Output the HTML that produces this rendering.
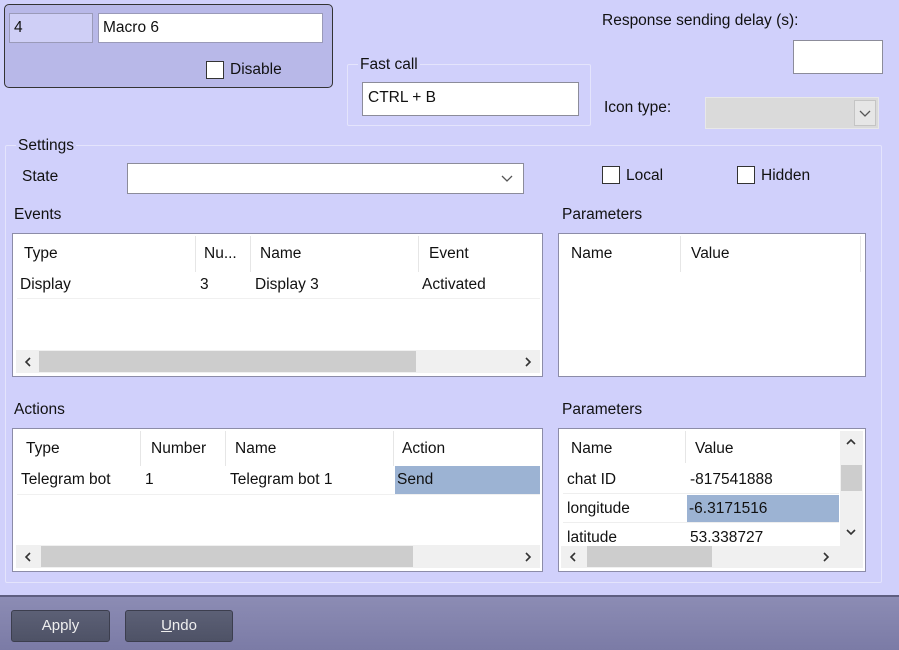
<!DOCTYPE html>
<html><head><meta charset="utf-8"><style>
*{box-sizing:border-box;margin:0;padding:0}
body{width:899px;height:650px;background:#d0d0fb;font-family:"Liberation Sans",sans-serif;font-size:15.5px;color:#111;position:relative;overflow:hidden}
.a{position:absolute}
.t{position:absolute;white-space:nowrap;line-height:16px}
.in{position:absolute;background:#fff;border:1px solid #8c8c9a}
.cb{position:absolute;width:18px;height:18px;background:#fff;border:1px solid #333}
.grp{position:absolute;border:1px solid #e4e4fc;border-radius:2px}
.tbl{position:absolute;background:#fff;border:1px solid #8c8ca8}
.sep{position:absolute;width:1px;background:#e6e6e6}
.hl{position:absolute;background:#9cb3d3}
.sb{position:absolute;background:#f0f0f0}
.th{position:absolute;background:#cdcdcd}
.btn{position:absolute;height:32px;border:1px solid #3c3e4e;border-radius:3px;background:linear-gradient(#5c6076,#4e5266);color:#eee;text-align:center;line-height:30px;font-size:15px}
svg.ar{position:absolute}
</style></head><body>
<div class="a" style="left:4px;top:4px;width:329px;height:84px;background:#b8b8e8;border:1px solid #333;border-radius:5px"></div>
<div class="a" style="left:9px;top:13px;width:84px;height:30px;background:#cfcff6;border:1px solid #9a9ab8"></div>
<div class="t" style="left:14px;top:20px">4</div>
<div class="in" style="left:98px;top:13px;width:225px;height:30px;border-color:#9a9ab8"></div>
<div class="t" style="left:103px;top:20px">Macro 6</div>
<div class="cb" style="left:206px;top:61px"></div>
<div class="t" style="left:230px;top:62px">Disable</div>
<div class="grp" style="left:347px;top:64px;width:244px;height:62px"></div>
<div class="t" style="left:358px;top:57px;background:#d0d0fb;padding:0 2px">Fast call</div>
<div class="in" style="left:362px;top:82px;width:217px;height:34px"></div>
<div class="t" style="left:368px;top:90px">CTRL + B</div>
<div class="t" style="left:602px;top:13px">Response sending delay (s):</div>
<div class="in" style="left:793px;top:40px;width:90px;height:34px"></div>
<div class="t" style="left:604px;top:100px">Icon type:</div>
<div class="a" style="left:705px;top:97px;width:174px;height:32px;background:#dadada;border:1px solid #e8e8e8"></div>
<div class="a" style="left:854px;top:100px;width:22px;height:26px;border:1px solid #c4c4c4;background:#e6e6e6"></div>
<svg class="ar" style="left:858px;top:108px" width="14" height="10"><path d="M2 3l5 5 5-5" fill="none" stroke="#555" stroke-width="1.3"/></svg>
<div class="grp" style="left:5px;top:145px;width:877px;height:438px"></div>
<div class="t" style="left:16px;top:138px;background:#d0d0fb;padding:0 2px">Settings</div>
<div class="t" style="left:22px;top:169px">State</div>
<div class="in" style="left:127px;top:163px;width:397px;height:31px"></div>
<svg class="ar" style="left:500px;top:173px" width="14" height="10"><path d="M2 3l5 5 5-5" fill="none" stroke="#555" stroke-width="1.3"/></svg>
<div class="cb" style="left:602px;top:166px"></div>
<div class="t" style="left:626px;top:168px">Local</div>
<div class="cb" style="left:737px;top:166px"></div>
<div class="t" style="left:761px;top:168px">Hidden</div>
<div class="t" style="left:14px;top:207px">Events</div>
<div class="tbl" style="left:12px;top:233px;width:531px;height:144px"></div>
<div class="sep" style="left:195px;top:236px;height:36px"></div>
<div class="sep" style="left:250px;top:236px;height:36px"></div>
<div class="sep" style="left:418px;top:236px;height:36px"></div>
<div class="a" style="left:17px;top:298px;width:523px;height:1px;background:#f0f0f0"></div>
<div class="t" style="left:24px;top:246px">Type</div>
<div class="t" style="left:204px;top:246px">Nu...</div>
<div class="t" style="left:260px;top:246px">Name</div>
<div class="t" style="left:429px;top:246px">Event</div>
<div class="t" style="left:20px;top:277px">Display</div>
<div class="t" style="left:200px;top:277px">3</div>
<div class="t" style="left:255px;top:277px">Display 3</div>
<div class="t" style="left:422px;top:277px">Activated</div>
<div class="sb" style="left:16px;top:350px;width:524px;height:23px"></div>
<div class="th" style="left:39px;top:351px;width:377px;height:21px"></div>
<svg class="ar" style="left:23px;top:356px" width="10" height="12"><path d="M7 2L3 6l4 4" fill="none" stroke="#333" stroke-width="1.6"/></svg>
<svg class="ar" style="left:523px;top:356px" width="10" height="12"><path d="M3 2l4 4-4 4" fill="none" stroke="#333" stroke-width="1.6"/></svg>
<div class="t" style="left:562px;top:207px">Parameters</div>
<div class="tbl" style="left:558px;top:233px;width:308px;height:144px"></div>
<div class="sep" style="left:680px;top:236px;height:36px"></div>
<div class="sep" style="left:860px;top:236px;height:36px"></div>
<div class="t" style="left:571px;top:246px">Name</div>
<div class="t" style="left:691px;top:246px">Value</div>
<div class="t" style="left:14px;top:402px">Actions</div>
<div class="tbl" style="left:12px;top:428px;width:531px;height:144px"></div>
<div class="sep" style="left:140px;top:431px;height:35px"></div>
<div class="sep" style="left:225px;top:431px;height:35px"></div>
<div class="sep" style="left:393px;top:431px;height:35px"></div>
<div class="a" style="left:17px;top:494px;width:523px;height:1px;background:#f0f0f0"></div>
<div class="hl" style="left:395px;top:466px;width:145px;height:28px"></div>
<div class="t" style="left:26px;top:441px">Type</div>
<div class="t" style="left:151px;top:441px">Number</div>
<div class="t" style="left:235px;top:441px">Name</div>
<div class="t" style="left:402px;top:441px">Action</div>
<div class="t" style="left:21px;top:472px">Telegram bot</div>
<div class="t" style="left:145px;top:472px">1</div>
<div class="t" style="left:230px;top:472px">Telegram bot 1</div>
<div class="t" style="left:397px;top:472px">Send</div>
<div class="sb" style="left:16px;top:545px;width:524px;height:23px"></div>
<div class="th" style="left:41px;top:546px;width:372px;height:21px"></div>
<svg class="ar" style="left:23px;top:551px" width="10" height="12"><path d="M7 2L3 6l4 4" fill="none" stroke="#333" stroke-width="1.6"/></svg>
<svg class="ar" style="left:523px;top:551px" width="10" height="12"><path d="M3 2l4 4-4 4" fill="none" stroke="#333" stroke-width="1.6"/></svg>
<div class="t" style="left:562px;top:402px">Parameters</div>
<div class="tbl" style="left:558px;top:428px;width:308px;height:144px"></div>
<div class="sep" style="left:685px;top:431px;height:32px"></div>
<div class="a" style="left:563px;top:493px;width:276px;height:1px;background:#eee"></div>
<div class="a" style="left:563px;top:522px;width:276px;height:1px;background:#eee"></div>
<div class="hl" style="left:687px;top:495px;width:152px;height:27px"></div>
<div class="t" style="left:571px;top:441px">Name</div>
<div class="t" style="left:695px;top:441px">Value</div>
<div class="t" style="left:567px;top:472px">chat ID</div>
<div class="t" style="left:690px;top:472px">-817541888</div>
<div class="t" style="left:567px;top:501px">longitude</div>
<div class="t" style="left:689px;top:501px">-6.3171516</div>
<div class="t" style="left:567px;top:530px">latitude</div>
<div class="t" style="left:690px;top:530px">53.338727</div>
<div class="sb" style="left:840px;top:431px;width:23px;height:115px"></div>
<div class="th" style="left:841px;top:465px;width:21px;height:26px"></div>
<svg class="ar" style="left:845px;top:437px" width="12" height="10"><path d="M2 7l4-4 4 4" fill="none" stroke="#333" stroke-width="1.6"/></svg>
<svg class="ar" style="left:845px;top:527px" width="12" height="10"><path d="M2 3l4 4 4-4" fill="none" stroke="#333" stroke-width="1.6"/></svg>
<div class="sb" style="left:561px;top:546px;width:302px;height:22px"></div>
<div class="th" style="left:587px;top:546px;width:125px;height:21px"></div>
<svg class="ar" style="left:568px;top:551px" width="10" height="12"><path d="M7 2L3 6l4 4" fill="none" stroke="#333" stroke-width="1.6"/></svg>
<svg class="ar" style="left:821px;top:551px" width="10" height="12"><path d="M3 2l4 4-4 4" fill="none" stroke="#333" stroke-width="1.6"/></svg>
<div class="a" style="left:0;top:595px;width:899px;height:55px;background:linear-gradient(#8c8cb4,#7b7ba6);border-top:2px solid #5e5e80"></div>
<div class="btn" style="left:11px;top:610px;width:99px">Apply</div>
<div class="btn" style="left:125px;top:610px;width:108px"><u>U</u>ndo</div>
</body></html>
